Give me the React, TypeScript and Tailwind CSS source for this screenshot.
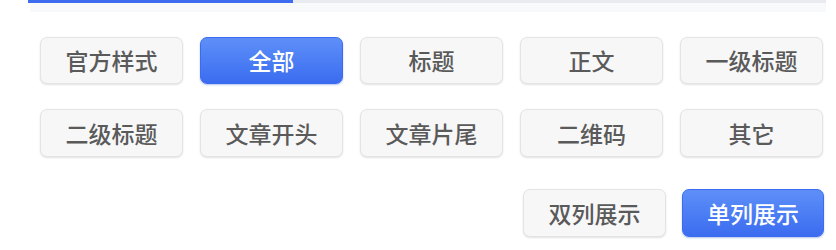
import { useState } from 'react';

const categories = ['官方样式', '全部', '标题', '正文', '一级标题', '二级标题', '文章开头', '文章片尾', '二维码', '其它'];

const font = { fontFamily: '"Noto Sans CJK SC", "Noto Sans", sans-serif' };

function Chip({ label, active, onClick, className }: { label: string; active: boolean; onClick: () => void; className?: string }) {
  return (
    <button
      onClick={onClick}
      className={`flex items-center justify-center rounded-[7px] text-[23px] font-medium leading-none ${
        active
          ? 'bg-gradient-to-b from-[#5e8ff8] to-[#3b6cf0] text-white border border-[#3c6cee] shadow-[0_1px_2px_rgba(40,80,200,0.35)]'
          : 'bg-[#f7f7f8] text-[#5a5a5a] border border-[#e4e4e6] shadow-[0_1px_2px_rgba(0,0,0,0.12)]'
      } ${className || ''}`}
    >
      {label}
    </button>
  );
}

export default function App() {
  const [active, setActive] = useState('全部');
  const [layout, setLayout] = useState('single');

  return (
    <div className="w-[836px] h-[250px] bg-white overflow-hidden" style={font}>
      {/* progress */}
      <div className="ml-[28px] w-[798px] h-[3px] bg-[#e9ebf0]">
        <div className="w-[265px] h-full bg-[#3d6cf0]" />
      </div>
      <div className="ml-[30px] w-[796px] h-[9px] bg-[#f8f9fb]" />

      <div className="ml-[40px] mt-[25px] w-[783px] grid grid-cols-5 gap-x-[17px] gap-y-[25px]">
        {categories.map((c, i) => (
          <Chip
            key={c}
            label={c}
            active={active === c}
            onClick={() => setActive(c)}
            className={i < 5 ? 'h-[47px]' : 'h-[48px]'}
          />
        ))}
      </div>

      <div className="mt-[32px] pr-[12px] flex justify-end gap-[16px]">
        <Chip label="双列展示" active={layout === 'double'} onClick={() => setLayout('double')} className="w-[143px] h-[48px]" />
        <Chip label="单列展示" active={layout === 'single'} onClick={() => setLayout('single')} className="w-[142px] h-[48px]" />
      </div>
    </div>
  );
}
